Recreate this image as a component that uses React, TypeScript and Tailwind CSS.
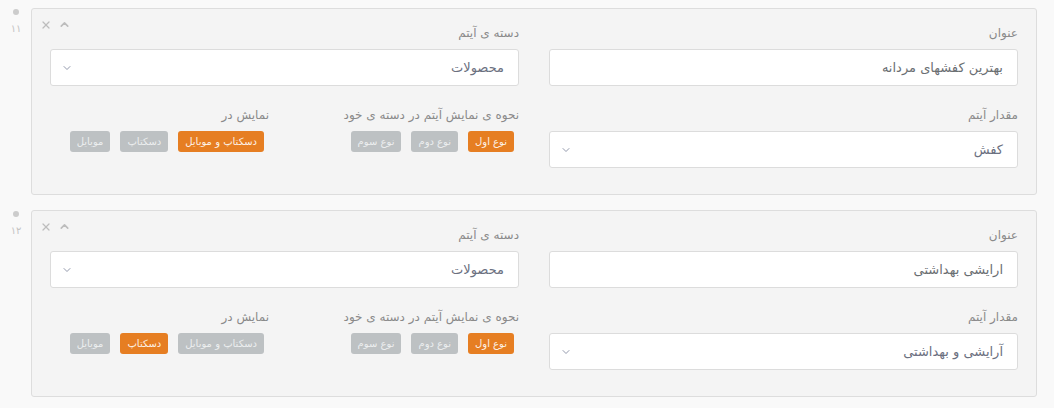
import { X, ChevronUp, ChevronDown } from 'lucide-react';

const ITEMS = [
  {
    no: '۱۱',
    title: 'بهترین کفشهای مردانه',
    category: 'محصولات',
    value: 'کفش',
    layout: 0,
    display: 0,
  },
  {
    no: '۱۲',
    title: 'ارایشی بهداشتی',
    category: 'محصولات',
    value: 'آرایشی و بهداشتی',
    layout: 0,
    display: 1,
  },
];

const LAYOUTS = ['نوع اول', 'نوع دوم', 'نوع سوم'];
const DISPLAYS = ['دسکتاپ و موبایل', 'دسکتاپ', 'موبایل'];

function Label({ children }: { children: React.ReactNode }) {
  return (
    <div className="h-[18px] mb-[7px] text-[12px] leading-[18px] text-[#8a8a8a]">
      {children}
    </div>
  );
}

function TextBox({ value }: { value: string }) {
  return (
    <div className="h-[37px] bg-white border border-[#dcdcdc] rounded-[3px] px-[14px] flex items-center text-[13px] text-[#6a6e72]">
      {value}
    </div>
  );
}

function SelectBox({ value }: { value: string }) {
  return (
    <div className="h-[37px] bg-white border border-[#dcdcdc] rounded-[3px] pr-[14px] pl-[10px] flex items-center justify-between text-[13px] text-[#6b7080]">
      <span>{value}</span>
      <ChevronDown size={12} strokeWidth={1.5} className="text-[#6f7790]" />
    </div>
  );
}

function Pills({ options, active }: { options: string[]; active: number }) {
  return (
    <div className="flex gap-[10px] pr-[5px]">
      {options.map((o, i) => (
        <span
          key={o}
          className={
            i === active
              ? 'h-[21px] px-[7px] rounded-[3px] bg-[#e67e22] text-[#fdf1e6] text-[10px] leading-[21px]'
              : 'h-[21px] px-[7px] rounded-[3px] bg-[#bdc1c3] text-[#eceeef] text-[10px] leading-[21px]'
          }
        >
          {o}
        </span>
      ))}
    </div>
  );
}

function ItemCard({ item }: { item: (typeof ITEMS)[number] }) {
  return (
    <div className="flex">
      {/* drag gutter */}
      <div className="w-[31px] flex flex-col items-center pt-[1px] pl-[1px]">
        <span className="w-[6px] h-[6px] rounded-full bg-[#cccccc]" />
        <span className="mt-[7px] text-[10px] leading-[14px] text-[#c4c4c4]">{item.no}</span>
      </div>

      <div className="relative w-[1006px] bg-[#f4f4f4] border border-[#dddddd] rounded-[3px] pt-[15px] pb-[26px] px-[18px]">
        <div className="absolute left-[8px] top-[9px] flex items-center gap-[6px] text-[#bdbdbd]">
          <X size={12} strokeWidth={2.5} />
          <ChevronUp size={13} strokeWidth={3} />
        </div>

        <div dir="rtl" className="grid grid-cols-2 gap-x-[30px]">
          <div>
            <Label>عنوان</Label>
            <TextBox value={item.title} />
          </div>
          <div>
            <Label>دسته ی آیتم</Label>
            <SelectBox value={item.category} />
          </div>

          <div className="mt-[20px]">
            <Label>مقدار آیتم</Label>
            <SelectBox value={item.value} />
          </div>
          <div className="mt-[20px] flex">
            <div className="w-[250px]">
              <Label>نحوه ی نمایش آیتم در دسته ی خود</Label>
              <Pills options={LAYOUTS} active={item.layout} />
            </div>
            <div className="flex-1">
              <Label>نمایش در</Label>
              <Pills options={DISPLAYS} active={item.display} />
            </div>
          </div>
        </div>
      </div>
    </div>
  );
}

export default function App() {
  return (
    <div
      className="w-[1054px] h-[408px] bg-[#f9f9f9] pt-[8px] flex flex-col gap-[15px]"
      style={{ fontFamily: '"DejaVu Sans", sans-serif' }}
    >
      {ITEMS.map((item) => (
        <ItemCard key={item.no} item={item} />
      ))}
    </div>
  );
}
